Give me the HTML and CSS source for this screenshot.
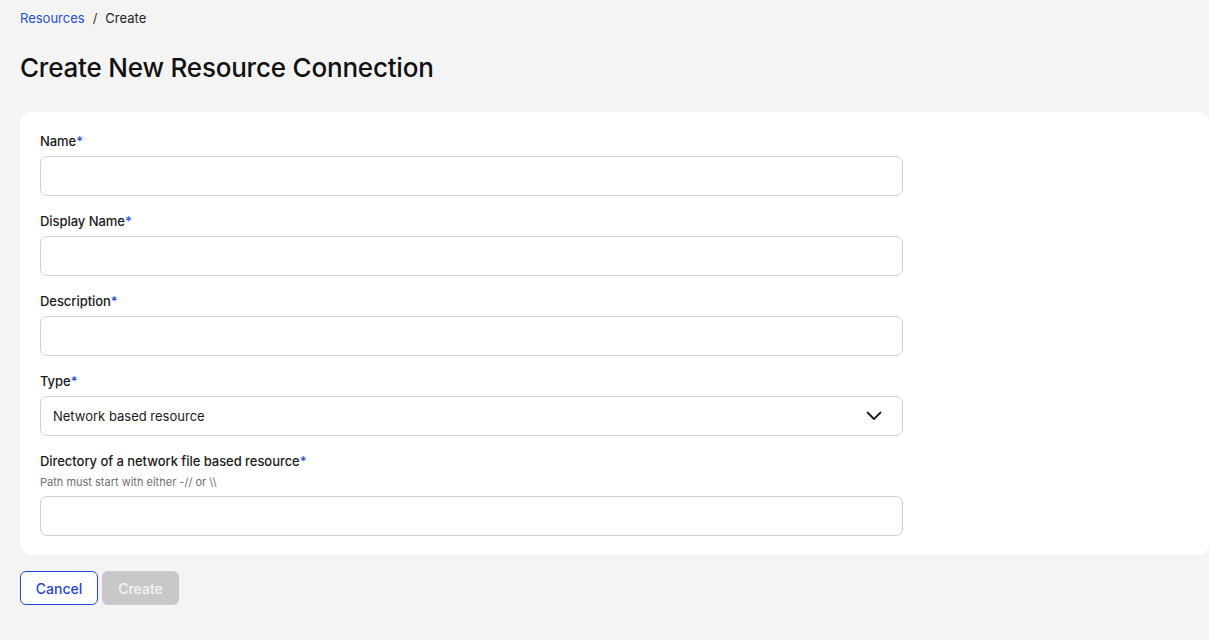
FILE: index.html
```html
<!DOCTYPE html>
<html lang="en">
<head>
<meta charset="utf-8">
<title>Create New Resource Connection</title>
<link rel="stylesheet" href="styles.css">
</head>
<body>
<div class="page">
  <nav class="breadcrumb">
    <a class="crumb-link" href="#">Resources</a>
    <span class="crumb-sep">/</span>
    <span class="crumb-current">Create</span>
  </nav>
  <h1 class="title">Create New Resource Connection</h1>
  <form class="card">
    <div class="field">
      <label class="label">Name<span class="req">*</span></label>
      <input class="input" type="text">
    </div>
    <div class="field">
      <label class="label">Display Name<span class="req">*</span></label>
      <input class="input" type="text">
    </div>
    <div class="field">
      <label class="label">Description<span class="req">*</span></label>
      <input class="input" type="text">
    </div>
    <div class="field">
      <label class="label">Type<span class="req">*</span></label>
      <div class="select">
        <span class="select-value">Network based resource</span>
        <svg class="chevron" width="16" height="10" viewBox="0 0 16 10" fill="none"><path d="M1.5 1.5 L8 8 L14.5 1.5" stroke="#1b1b1b" stroke-width="1.8" stroke-linecap="round" stroke-linejoin="round"/></svg>
      </div>
    </div>
    <div class="field">
      <label class="label">Directory of a network file based resource<span class="req">*</span></label>
      <div class="help">Path must start with either -// or \\</div>
      <input class="input" type="text">
    </div>
  </form>
  <div class="actions">
    <button class="btn btn-outline" type="button">Cancel</button>
    <button class="btn btn-disabled" type="button" disabled>Create</button>
  </div>
</div>
</body>
</html>
```
FILE: styles.css
```css
* { box-sizing: border-box; }
html, body { margin: 0; padding: 0; }
body {
  background: #f4f4f4;
  font-family: Inter, "Liberation Sans", sans-serif;
  color: #161616;
}
.page {
  padding: 9px 0 0 20px;
}
.breadcrumb {
  display: flex;
  align-items: center;
  font-size: 13px;
  line-height: 18px;
  gap: 8px;
}
.crumb-link { color: #1f4fd8; text-decoration: none; }
.crumb-sep { color: #333; }
.crumb-current { color: #222; }
.title {
  margin: 23px 0 0 0;
  font-size: 26px;
  font-weight: 500;
  line-height: 36px;
  letter-spacing: -0.2px;
  color: #111;
}
.card {
  margin-top: 26px;
  background: #fff;
  border-radius: 12px;
  margin-right: -1px;
  padding: 19px 20px 19px 20px;
  display: flex;
  flex-direction: column;
  gap: 15px;
}
.field {
  display: flex;
  flex-direction: column;
  width: 863px;
}
.label {
  font-size: 13px;
  font-weight: 500;
  line-height: 20px;
  margin-bottom: 5px;
  color: #1a1a1a;
  letter-spacing: -0.05px;
}
.req { color: #1f4fd8; }
.help {
  font-size: 11px;
  line-height: 16px;
  color: #707070;
  margin-top: -2px;
  margin-bottom: 6px;
}
.input, .select {
  height: 40px;
  border: 1px solid #cfcfcf;
  border-radius: 7px;
  background: #fff;
  font: inherit;
}
.select {
  display: flex;
  align-items: center;
  justify-content: space-between;
  padding: 0 20px 0 12px;
  font-size: 13px;
}
.select-value { color: #1a1a1a; }
.actions {
  display: flex;
  gap: 4px;
  margin-top: 16px;
}
.btn {
  height: 34px;
  border-radius: 6px;
  font-family: Inter, "Liberation Sans", sans-serif;
  font-size: 14px;
  font-weight: 500;
  padding: 0;
}
.btn-outline {
  width: 78px;
  background: #fff;
  border: 1px solid #1f45d6;
  color: #1f45d6;
}
.btn-disabled {
  width: 77px;
  background: #c8c8c8;
  border: none;
  color: #f4f4f4;
}
```
